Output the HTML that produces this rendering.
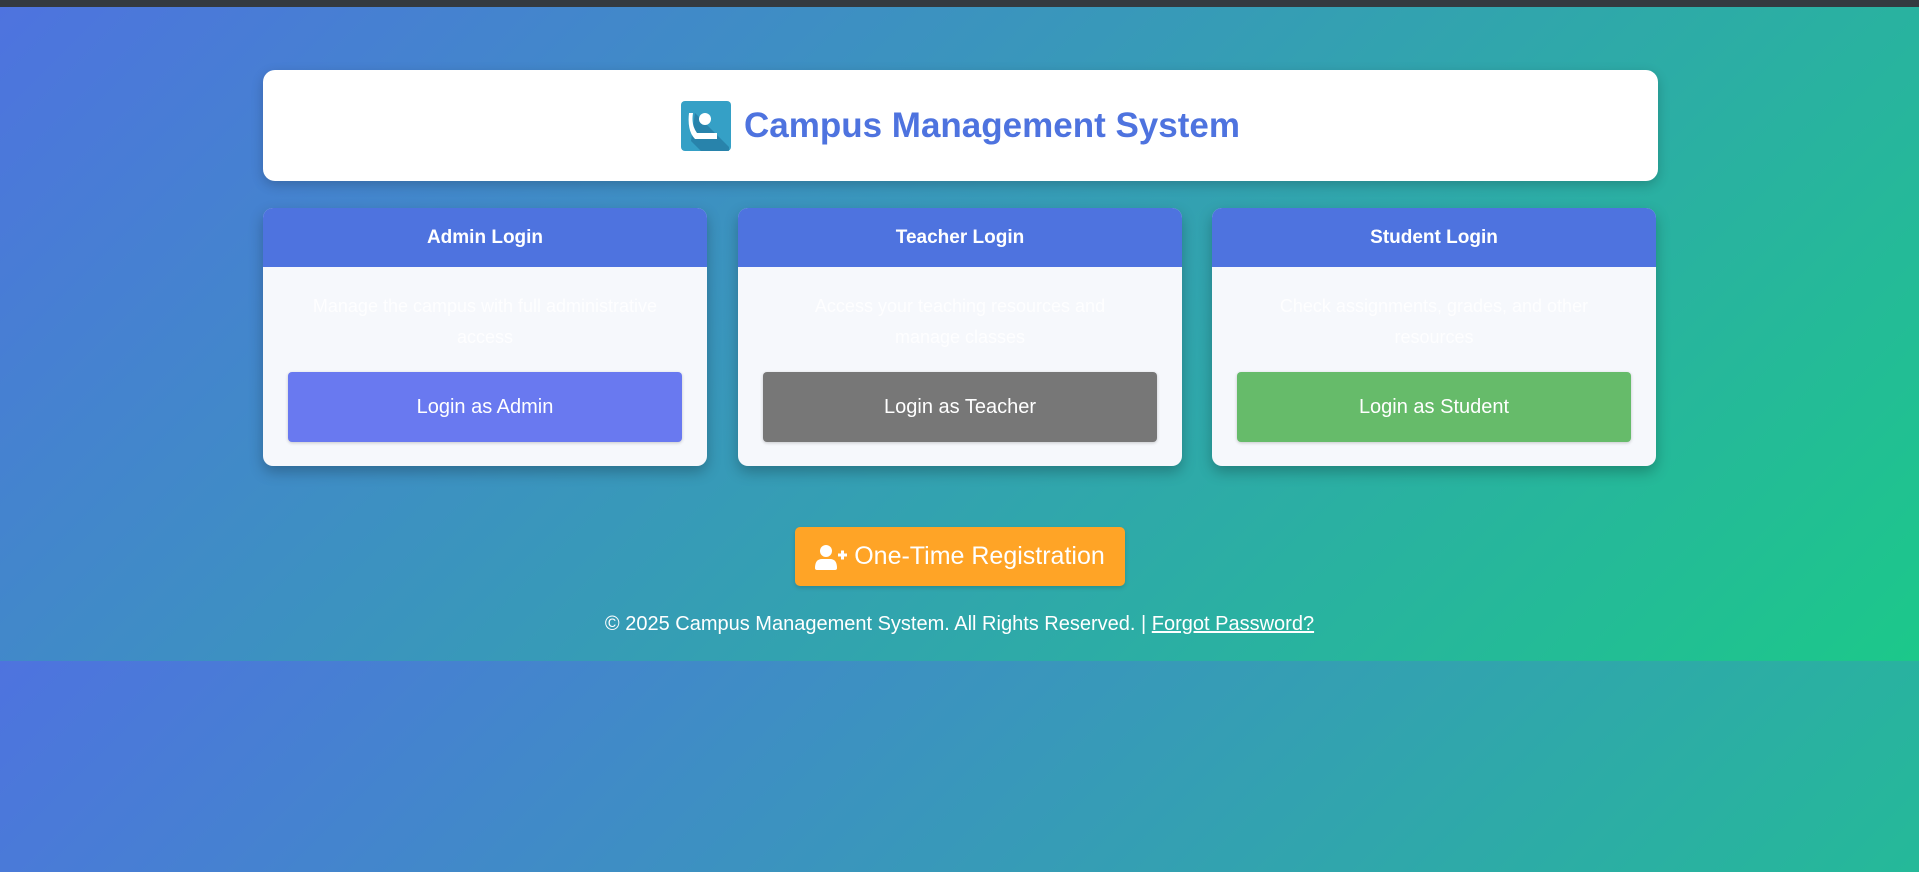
<!DOCTYPE html>
<html><head><meta charset="utf-8"><style>
html,body{margin:0;padding:0;width:1919px;height:872px;overflow:hidden;font-family:"Liberation Sans",Arial,sans-serif;position:relative}
.bg2{position:absolute;left:0;top:661px;width:1919px;height:211px;background:linear-gradient(135deg,#4e73df 0%,#1cc88a 100%);background-size:1919px 654px;background-repeat:no-repeat}
.bar{position:absolute;left:0;top:0;width:1919px;height:7px;background:#343a40}
.main{position:absolute;left:0;top:7px;width:1919px;height:654px;background:linear-gradient(135deg,#4e73df 0%,#1cc88a 100%)}
.head{position:absolute;left:263px;top:70px;width:1395px;height:111px;background:#fff;border-radius:12px;box-shadow:0 4px 12px rgba(0,0,0,.2);display:flex;align-items:center;justify-content:center}
.head h1{margin:0;font-size:35px;font-weight:bold;color:#4e73df;margin-left:13px}
.card{position:absolute;top:208px;width:444px;height:258px;background:#f6f8fc;border-radius:10px;overflow:hidden;box-shadow:0 6px 14px rgba(0,0,0,.25)}
.card .h{height:59px;background:#4e73df;color:#fff;font-weight:bold;font-size:19px;text-align:center;line-height:59px}
.card p{margin:24px 48px 0;height:62px;color:rgba(255,255,255,.85);font-size:18px;line-height:31px;text-align:center}
.card .b{position:absolute;left:25px;right:25px;top:164px;height:70px;border-radius:4px;color:#fff;font-size:20px;text-align:center;line-height:70px;box-shadow:0 1px 3px rgba(0,0,0,.2)}
.reg{position:absolute;left:795px;top:527px;width:330px;height:59px;background:#ffa426;border-radius:5px;color:#fff;font-size:25px;display:flex;align-items:center;justify-content:center;box-shadow:0 2px 4px rgba(0,0,0,.15)}
.foot{position:absolute;left:0;width:1919px;top:613px;text-align:center;color:#fff;font-size:20px}
.foot a{color:#fff;text-decoration:underline}
</style></head><body>
<div class="main"></div>
<div class="bg2"></div>
<div class="bar"></div>
<div class="head">
<svg width="50" height="50" viewBox="0 0 50 50"><rect width="50" height="50" rx="4" fill="#35a0c6"/><path d="M14 12 L48 46 L48 50 L20 50 L10 40Z" fill="#1f6f9a" opacity=".6"/><path d="M12 12 Q10 24 16 32 L36 32 L36 38 L14 38 Q6 30 8 12Z" fill="#fff"/><circle cx="24" cy="18" r="6" fill="#fff"/></svg>
<h1>Campus Management System</h1></div>
<div class="card" style="left:263px"><div class="h">Admin Login</div><p>Manage the campus with full administrative access</p><div class="b" style="background:#6979f0">Login as Admin</div></div>
<div class="card" style="left:738px"><div class="h">Teacher Login</div><p>Access your teaching resources and manage classes</p><div class="b" style="background:#777">Login as Teacher</div></div>
<div class="card" style="left:1212px"><div class="h">Student Login</div><p>Check assignments, grades, and other resources</p><div class="b" style="background:#66bb6a">Login as Student</div></div>
<div class="reg"><svg width="32" height="26" viewBox="0 0 32 26" style="margin-right:7px"><circle cx="11" cy="7" r="6" fill="#fff"/><path d="M0 24 Q0 15 7 15 L15 15 Q22 15 22 24 Q22 26 20 26 L2 26 Q0 26 0 24Z" fill="#fff"/><path d="M23 11h9M27.5 6.5v9" stroke="#fff" stroke-width="3"/></svg>One-Time Registration</div>
<div class="foot">© 2025 Campus Management System. All Rights Reserved. | <a>Forgot Password?</a></div>
</body></html>
